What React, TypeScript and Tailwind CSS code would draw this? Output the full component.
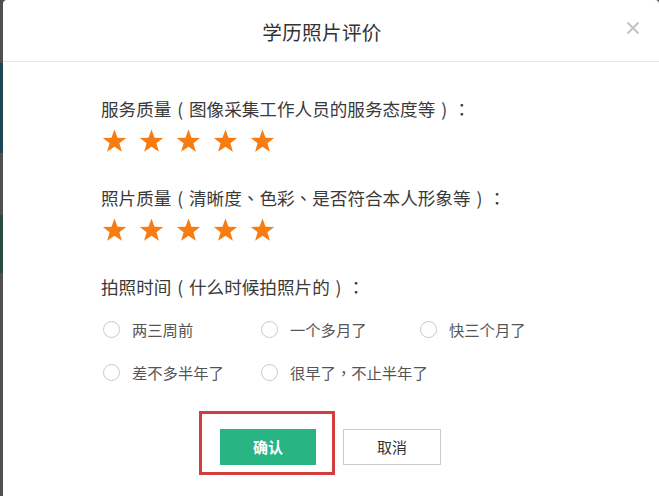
import React from "react";

const FONT = { fontFamily: '"Microsoft YaHei", "Noto Sans CJK SC", "Noto Sans", sans-serif' };
const PUNCT = { fontFamily: '"Noto Sans CJK TC", "Noto Sans CJK SC", sans-serif' };

function T({ text }: { text: string }) {
  const parts = text.split(/([（）：，、])/);
  return (
    <>
      {parts.map((p, i) => {
        if (p === "（" || p === "）")
          return (
            <span key={i} className="inline-block w-[1em] text-center">
              {p === "（" ? "(" : ")"}
            </span>
          );
        if (/^[：，、]$/.test(p))
          return (
            <span key={i} style={PUNCT}>
              {p}
            </span>
          );
        return <React.Fragment key={i}>{p}</React.Fragment>;
      })}
    </>
  );
}

function Star() {
  return (
    <svg width="25" height="24" viewBox="0 0 24 23" className="block">
      <polygon
        points="12,0.5 14.9,8.3 23.2,8.5 16.7,13.6 19.1,21.8 12,17 4.9,21.8 7.3,13.6 0.8,8.5 9.1,8.3"
        fill="#f77c12"
      />
    </svg>
  );
}

function Stars() {
  return (
    <div className="flex gap-[12px] ml-[1px]">
      <Star />
      <Star />
      <Star />
      <Star />
      <Star />
    </div>
  );
}

function Radio({ label }: { label: string }) {
  return (
    <div className="flex items-center whitespace-nowrap">
      <span className="w-[17px] h-[17px] rounded-full border border-[#c9c9c9] bg-white shrink-0" />
      <span className="ml-[12px] text-[15.3px] leading-[22px] text-[#555]">
        <T text={label} />
      </span>
    </div>
  );
}

export default function App() {
  return (
    <div
      className="w-[659px] h-[496px] overflow-hidden flex bg-[#4a4a4a] [text-spacing-trim:space-all]"
      style={FONT}
    >
      <div className="w-[3px] shrink-0 flex flex-col">
        <div className="h-[63px] bg-[#505050]" />
        <div className="h-[90px] bg-[#1f4654]" />
        <div className="h-[62px] bg-[#505050]" />
        <div className="h-[58px] bg-[#284d40]" />
        <div className="flex-1 bg-[#505050]" />
      </div>
      <div className="flex-1 bg-white rounded-t-[4px] flex flex-col">
        <div className="relative h-[62px] border-b border-[#e6e6e6] flex items-center justify-center pr-[18px] pt-[2px]">
          <span className="text-[19.6px] text-[#333] tracking-[0.3px]">学历照片评价</span>
          <svg
            className="absolute right-[19px] top-[21px]"
            width="14"
            height="14"
            viewBox="0 0 14 14"
          >
            <path d="M1.5 1.5 L12.5 12.5 M12.5 1.5 L1.5 12.5" stroke="#c4c4c4" strokeWidth="2" />
          </svg>
        </div>
        <div className="pl-[98px] pt-[35px] flex flex-col">
          <div className="text-[17.6px] leading-[24px] text-[#3a3a3a] whitespace-nowrap">
            <T text="服务质量（图像采集工作人员的服务态度等）：" />
          </div>
          <div className="mt-[8px]">
            <Stars />
          </div>
          <div className="mt-[33px] text-[17.6px] leading-[24px] text-[#3a3a3a] whitespace-nowrap">
            <T text="照片质量（清晰度、色彩、是否符合本人形象等）：" />
          </div>
          <div className="mt-[8px]">
            <Stars />
          </div>
          <div className="mt-[33px] text-[17.6px] leading-[24px] text-[#3a3a3a] whitespace-nowrap">
            <T text="拍照时间（什么时候拍照片的）：" />
          </div>
          <div className="mt-[19px] grid grid-cols-[158px_159px_160px] pl-[2px]">
            <Radio label="两三周前" />
            <Radio label="一个多月了" />
            <Radio label="快三个月了" />
          </div>
          <div className="mt-[21px] grid grid-cols-[158px_159px_160px] pl-[2px]">
            <Radio label="差不多半年了" />
            <Radio label="很早了，不止半年了" />
          </div>
          <div className="mt-[46px] pl-[119px] flex gap-[27px]">
            <div className="relative">
              <button className="w-[96px] h-[36px] bg-[#29b484] text-white text-[15px] font-bold">
                确认
              </button>
              <div className="absolute -left-[21px] -right-[19px] -top-[18px] -bottom-[10px] border-[3px] border-[#d43d3d] pointer-events-none" />
            </div>
            <button className="w-[98px] h-[36px] bg-white border border-[#cccccc] text-[#333] text-[15px]">
              取消
            </button>
          </div>
        </div>
      </div>
    </div>
  );
}
